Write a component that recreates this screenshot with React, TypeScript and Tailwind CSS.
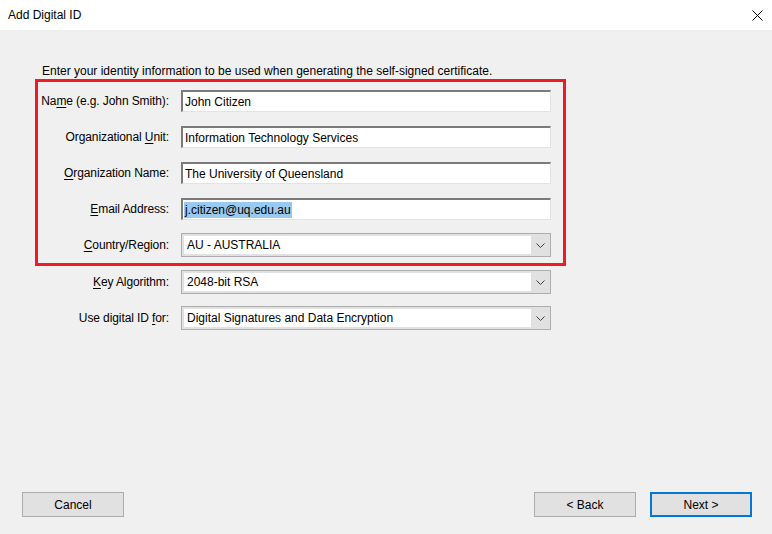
import React from 'react';

const font = { fontFamily: '"Liberation Sans", Arial, sans-serif' };

function Key({ children }: { children: React.ReactNode }) {
  return <span className="underline underline-offset-2">{children}</span>;
}

function Label({ children }: { children: React.ReactNode }) {
  return (
    <div className="w-[131px] shrink-0 text-right text-[12px] leading-none tracking-[-0.1px] text-black">{children}</div>
  );
}

function TextField({ value, selected = false }: { value: string; selected?: boolean }) {
  return (
    <div className="ml-[12px] flex h-[22px] w-[370px] items-center border-t-2 border-l-2 border-r border-b border-t-[#7a7a7a] border-l-[#7a7a7a] border-r-[#e3e3e3] border-b-[#e3e3e3] bg-white pl-[1px] text-[12px] text-black">
      <span className={selected ? 'bg-[#99c9ef] px-[1px] leading-[16px]' : 'px-[1px] leading-[16px]'}>{value}</span>
    </div>
  );
}

function SelectField({ value }: { value: string }) {
  return (
    <div className="ml-[12px] flex h-[24px] w-[370px] border border-[#adadad] bg-[#e1e1e1] p-[2px] pr-0">
      <div className="flex flex-1 items-center bg-white pl-[3px] text-[12px] text-black">{value}</div>
      <div className="flex w-[19px] items-center justify-center">
        <svg width="9" height="5" viewBox="0 0 9 5" fill="none">
          <path d="M0.5 0.5 L4.5 4.5 L8.5 0.5" stroke="#404040" strokeWidth="1" />
        </svg>
      </div>
    </div>
  );
}

function Button({ label, primary = false }: { label: string; primary?: boolean }) {
  return (
    <div
      className={
        primary
          ? 'flex h-[25px] w-[102px] items-center justify-center border-2 border-[#0078d7] bg-[#e1e1e1] text-[12px] text-black'
          : 'flex h-[25px] w-[102px] items-center justify-center border border-[#adadad] bg-[#e1e1e1] text-[12px] text-black'
      }
    >
      {label}
    </div>
  );
}

export default function App() {
  return (
    <div className="flex h-[534px] w-[772px] flex-col bg-[#f0f0f0]" style={font}>
      <div className="flex h-[30px] shrink-0 items-center justify-between bg-white pl-[8px] pr-[9px]">
        <span className="text-[12px] text-black">Add Digital ID</span>
        <svg width="11" height="11" viewBox="0 0 11 11">
          <path d="M0.5 0.5 L10.5 10.5 M10.5 0.5 L0.5 10.5" stroke="#000" strokeWidth="1" />
        </svg>
      </div>

      <div className="flex flex-1 flex-col">
        <div className="ml-[42px] mt-[34px] text-[12px] leading-[15px] text-black">
          Enter your identity information to be used when generating the self-signed certificate.
        </div>

        <div className="ml-[35px] flex w-[531px] flex-col border-[3px] border-[#ed1c24] pt-[8px] pb-[6px]">
          <div className="flex items-center">
            <Label>
              Na<Key>m</Key>e (e.g. John Smith):
            </Label>
            <TextField value="John Citizen" />
          </div>
          <div className="mt-[14px] flex items-center">
            <Label>
              Organizational <Key>U</Key>nit:
            </Label>
            <TextField value="Information Technology Services" />
          </div>
          <div className="mt-[14px] flex items-center">
            <Label>
              <Key>O</Key>rganization Name:
            </Label>
            <TextField value="The University of Queensland" />
          </div>
          <div className="mt-[14px] flex items-center">
            <Label>
              <Key>E</Key>mail Address:
            </Label>
            <TextField value="j.citizen@uq.edu.au" selected />
          </div>
          <div className="mt-[13px] flex items-center">
            <Label>
              <Key>C</Key>ountry/Region:
            </Label>
            <SelectField value="AU - AUSTRALIA" />
          </div>
        </div>

        <div className="ml-[38px] mt-[4px] flex items-center">
          <Label>
            <Key>K</Key>ey Algorithm:
          </Label>
          <SelectField value="2048-bit RSA" />
        </div>
        <div className="ml-[38px] mt-[12px] flex items-center">
          <Label>
            Use digital ID <Key>f</Key>or:
          </Label>
          <SelectField value="Digital Signatures and Data Encryption" />
        </div>

        <div className="mt-auto mb-[17px] flex items-center pl-[22px] pr-[20px]">
          <Button label="Cancel" />
          <div className="ml-auto flex gap-[14px]">
            <Button label="< Back" />
            <Button label="Next >" primary />
          </div>
        </div>
      </div>
    </div>
  );
}
